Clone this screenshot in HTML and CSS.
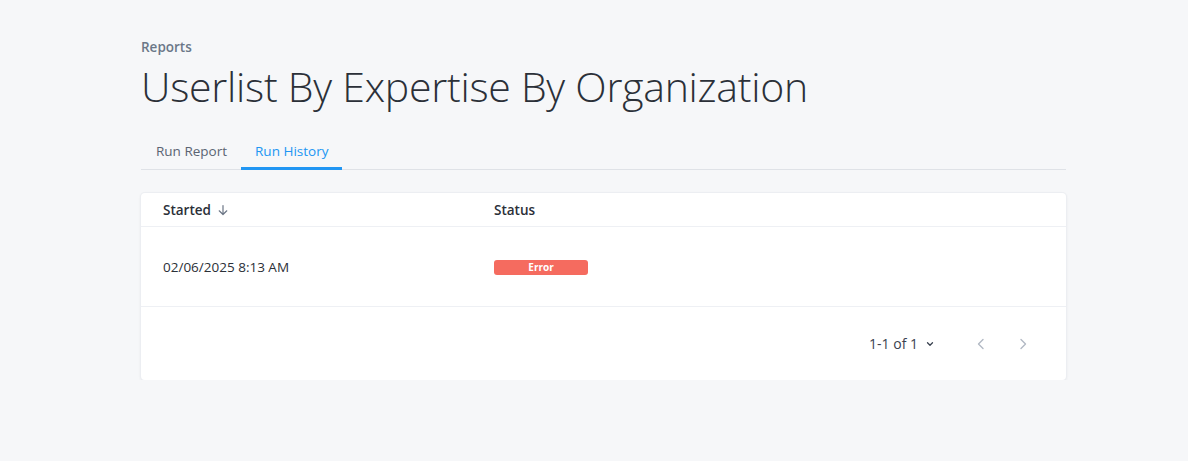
FILE: index.html
```html
<!DOCTYPE html>
<html lang="en">
<head>
<meta charset="utf-8">
<title>Userlist By Expertise By Organization</title>
<link rel="stylesheet" href="styles.css">
</head>
<body>
<main class="page">
  <div class="crumb">Reports</div>
  <h1 class="title">Userlist By Expertise By Organization</h1>
  <nav class="tabs">
    <a class="tab">Run Report</a>
    <a class="tab active">Run History</a>
  </nav>
  <section class="card">
    <div class="row head">
      <div class="col c1">Started
        <svg class="sort" width="12" height="12" viewBox="0 0 12 12"><path d="M6 1.5v9M2.2 6.8 6 10.5l3.8-3.7" fill="none" stroke="#6b7585" stroke-width="1.2" stroke-linecap="round" stroke-linejoin="round"/></svg>
      </div>
      <div class="col c2">Status</div>
    </div>
    <div class="row body">
      <div class="col c1 date">02/06/2025 8:13 AM</div>
      <div class="col c2"><span class="badge">Error</span></div>
    </div>
    <div class="foot">
      <span class="range">1-1 of 1</span>
      <svg class="dd" width="10" height="10" viewBox="0 0 10 10"><path d="M2.5 3.8 5 6.3l2.5-2.5" fill="none" stroke="#3a4250" stroke-width="1.3" stroke-linecap="round" stroke-linejoin="round"/></svg>
      <div class="pager">
        <svg width="12" height="14" viewBox="0 0 12 14"><path d="M8 2.5 3.5 7 8 11.5" fill="none" stroke="#b2b9c4" stroke-width="1.4" stroke-linecap="round" stroke-linejoin="round"/></svg>
        <svg width="12" height="14" viewBox="0 0 12 14"><path d="M4 2.5 8.5 7 4 11.5" fill="none" stroke="#b2b9c4" stroke-width="1.4" stroke-linecap="round" stroke-linejoin="round"/></svg>
      </div>
    </div>
  </section>
</main>
</body>
</html>
```

FILE: styles.css
```css
html, body {
  margin: 0;
  padding: 0;
  background: #f6f7f9;
  font-family: "Open Sans", "Liberation Sans", sans-serif;
  color: #2b3038;
}
.page {
  width: 925px;
  margin-left: 141px;
  padding-top: 38px;
}
.crumb {
  font-size: 13.5px;
  font-weight: 600;
  color: #6b7788;
  line-height: 18px;
}
.title {
  margin: 5px 0 0;
  font-size: 41px;
  font-weight: 300;
  line-height: 50px;
  color: #2b3038;
  letter-spacing: -0.25px;
}
.tabs {
  display: flex;
  margin-top: 24px;
  border-bottom: 1px solid #dfe2e7;
}
.tab {
  display: block;
  padding: 0 14px 0 15px;
  font-size: 13.5px;
  line-height: 32px;
  color: #5b6473;
  border-bottom: 3px solid transparent;
  margin-bottom: -1px;
}
.tab.active {
  color: #2196f3;
  border-bottom-color: #2196f3;
  padding: 0 14px 0 14px;
}
.card {
  margin-top: 23px;
  background: #fff;
  border-radius: 4px;
  box-shadow: 0 0 0 1px #eceef2, 0 1px 3px rgba(30, 40, 60, 0.12);
}
.row {
  display: flex;
  border-bottom: 1px solid #eef0f4;
}
.col.c1 { width: 331px; padding-left: 22px; display: flex; align-items: center; gap: 6px; }
.col.c2 { flex: 1; display: flex; align-items: center; }
.head {
  height: 33px;
  font-size: 13.5px;
  font-weight: 600;
}
.body {
  height: 79px;
  font-size: 13.5px;
}
.date { color: #2b3038; }
.badge {
  display: inline-block;
  width: 94px;
  height: 15px;
  line-height: 15px;
  border-radius: 3px;
  background: #f56b5f;
  color: #fff;
  font-size: 10px;
  font-weight: 700;
  text-align: center;
  margin-top: 2px;
}
.foot {
  height: 73px;
  display: flex;
  align-items: center;
  justify-content: flex-end;
  padding-right: 37px;
  font-size: 14px;
  color: #3a4250;
}
.dd { margin-left: 7px; margin-top: 1px; }
.pager {
  display: flex;
  gap: 30px;
  margin-left: 40px;
}
```
